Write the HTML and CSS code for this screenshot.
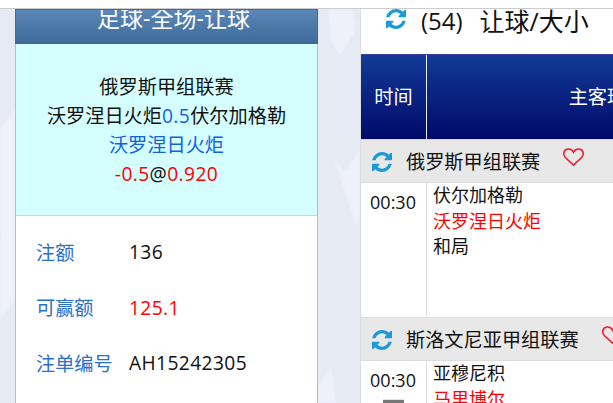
FILE: index.html
```html
<!DOCTYPE html>
<html lang="zh-CN">
<head>
  <meta charset="UTF-8" />
  <title>注单详情</title>
  <link rel="stylesheet" href="styles.css">
</head>
<body>
  <svg class="defs" width="0" height="0">
    <symbol id="refresh" viewBox="128 128 1536 1536">
      <path d="M1639 1056q0 5-1 7-64 268-268 434.5t-478 166.5q-146 0-282.5-55t-243.5-157l-129 129q-19 19-45 19t-45-19-19-45v-448q0-26 19-45t45-19h448q26 0 45 19t19 45-19 45l-137 137q71 66 161 102t187 36q134 0 250-65t186-179q11-17 53-117 8-23 30-23h192q13 0 22.5 9.5t9.5 22.5zm25-800v448q0 26-19 45t-45 19h-448q-26 0-45-19t-19-45 19-45l138-138q-148-137-349-137-134 0-250 65t-186 179q-11 17-53 117-8 23-30 23h-199q-13 0-22.5-9.5t-9.5-22.5v-7q65-268 270-434.5t480-166.5q146 0 284 55.500t245 156.500l130-129q19-19 45-19t45 19 19 45z"/>
    </symbol>
    <symbol id="heart" viewBox="0 0 24 20">
      <path d="M12 18.500 L3.500 10.500 C0.500 7.500 1.500 2.500 6 1.700 C8.500 1.300 10.800 2.500 12 5 C13.200 2.500 15.500 1.300 18 1.700 C22.500 2.500 23.500 7.500 20.500 10.500 Z"/>
    </symbol>
  </svg>

  <div class="top-strip"></div>

  <div class="main-container">
    <!-- Left Panel: bet slip -->
    <div class="slip">
      <div class="slip-header">足球-全场-让球</div>
      <div class="slip-match">
        <p>俄罗斯甲组联赛</p>
        <p>沃罗涅日火炬<span class="blue num">0.5</span>伏尔加格勒</p>
        <p class="blue">沃罗涅日火炬</p>
        <p class="num"><span class="red">-0.5</span>@<span class="red">0.920</span></p>
      </div>
      <div class="slip-rows">
        <div class="slip-row"><span class="slip-label">注额</span><span class="num">136</span></div>
        <div class="slip-row"><span class="slip-label">可赢额</span><span class="red num">125.1</span></div>
        <div class="slip-row"><span class="slip-label">注单编号</span><span class="num">AH15242305</span></div>
      </div>
    </div>

    <!-- Right Panel: matches -->
    <div class="matches">
      <div class="matches-title">
        <svg class="icon-refresh title-icon"><use href="#refresh"></use></svg>
        <span class="count">(54)</span>
        <span class="market">让球/大小</span>
      </div>
      <div class="grid">
        <div class="grid-head">
          <div class="col-time">时间</div>
          <div class="col-teams">主客球队</div>
        </div>

        <div class="league">
          <svg class="icon-refresh"><use href="#refresh"></use></svg>
          <span class="league-name">俄罗斯甲组联赛</span>
          <svg class="icon-heart"><use href="#heart"></use></svg>
        </div>
        <div class="match-row">
          <div class="col-time">00:30</div>
          <div class="col-names">
            <div>伏尔加格勒</div>
            <div class="red">沃罗涅日火炬</div>
            <div>和局</div>
          </div>
        </div>

        <div class="league">
          <svg class="icon-refresh"><use href="#refresh"></use></svg>
          <span class="league-name">斯洛文尼亚甲组联赛</span>
          <svg class="icon-heart"><use href="#heart"></use></svg>
        </div>
        <div class="match-row">
          <div class="col-time">
            00:30
            <div class="live-tag"></div>
          </div>
          <div class="col-names">
            <div>亚穆尼积</div>
            <div class="red">马里博尔</div>
          </div>
        </div>
      </div>
    </div>
  </div>
</body>
</html>
```

FILE: styles.css
```css
* {
  box-sizing: border-box;
}
html, body {
  height: 403px;
  overflow: hidden;
}
body {
  margin: 0;
  font-family: "Open Sans", "Noto Sans CJK SC", sans-serif;
  font-size: 19.2px;
  color: #111;
  background-color: #e6eaf3;
  background-image: url("data:image/svg+xml,%3Csvg xmlns='http://www.w3.org/2000/svg' width='613' height='403'%3E%3Cfilter id='b'%3E%3CfeGaussianBlur stdDeviation='1'/%3E%3C/filter%3E%3Cg fill='%23eef1fa' filter='url(%23b)'%3E%3Cpath d='M0 130L15 108V215L0 250Z'/%3E%3Cpath d='M0 250L15 215V300L0 320Z'/%3E%3Cpath d='M328 9H352L356 30L340 56L331 40Z'/%3E%3Cpath d='M334 160L345 172L360 150V215L356 225Z'/%3E%3Cpath d='M318 403V385L331 368L336 403Z'/%3E%3C/g%3E%3C/svg%3E");
  background-repeat: no-repeat;
}
.defs {
  display: block;
  height: 0;
}
p {
  margin: 0;
}
.blue {
  color: #1162e0;
}
.red {
  color: #ff0000;
}
.num {
  letter-spacing: 0.4px;
}
.top-strip {
  height: 9px;
  background: #fff;
  border-bottom: 1px solid #ccc;
}
.main-container {
  display: flex;
  height: 394px;
  padding-left: 15px;
}

/* Left panel */
.slip {
  width: 303px;
  flex-shrink: 0;
  background: #fff;
  border-left: 1px solid #bbb;
  border-right: 1px solid #bbb;
}
.slip-header {
  height: 35px;
  padding-left: 14px;
  line-height: 17px;
  text-align: center;
  font-size: 23px;
  color: #fff;
  background: linear-gradient(#5b87b8, #3d6a98);
  border: 1px solid #2c70ad;
  border-bottom: none;
  overflow: hidden;
  margin-left: -1px;
  margin-right: -1px;
}
.slip-match {
  height: 172px;
  padding-top: 28px;
  line-height: 29px;
  text-align: center;
  background: #d5ffff;
  border-bottom: 1px solid #ccd6da;
}
.slip-rows {
  padding: 8px 0 0 20px;
}
.slip-row {
  display: flex;
  align-items: center;
  height: 55.500px;
}
.slip-label {
  width: 93px;
  color: #2a70c8;
}

/* Right panel */
.matches {
  width: 253px;
  margin-left: 42px;
  background: #fff;
  border-left: 1px solid #ddd;
  overflow: hidden;
}
.matches-title {
  display: flex;
  height: 45px;
  font-size: 24px;
  line-height: 24px;
}
.icon-refresh {
  width: 20px;
  height: 20px;
  fill: #1a9ad6;
}
.title-icon {
  margin: 0 15px 0 25px;
}
.count {
  margin-right: 17px;
}
.market {
  font-size: 25px;
}
.grid {
  width: 426px;
}
.grid-head {
  display: flex;
  height: 86px;
  color: #fff;
  background: linear-gradient(#123a96, #010a6b);
  border-top: 1px solid #3b3f9c;
  border-bottom: 1px solid #d8d8d8;
}
.col-time {
  width: 66px;
  flex-shrink: 0;
  text-align: center;
  border-right: 1px solid #ddd;
}
.grid-head .col-time {
  border-right-color: #e8ecf5;
  line-height: 83px;
}
.col-teams {
  width: 360px;
  text-align: center;
  line-height: 83px;
}
.league {
  display: flex;
  align-items: center;
  height: 43px;
  padding-left: 11px;
  background: #e8e8e8;
  border-bottom: 1px solid #dcdcdc;
}
.league-name {
  margin-left: 14px;
  line-height: 26px;
  margin-top: 2px;
}
.league .icon-refresh {
  margin-top: 2px;
}
.icon-heart {
  width: 23px;
  height: 20px;
  margin: -8px 0 0 22px;
  fill: none;
  stroke: #f02030;
  stroke-width: 1.7;
  flex-shrink: 0;
}
.match-row {
  display: flex;
  height: 135px;
  border-bottom: 1px solid #dcdcdc;
}
.match-row .col-time {
  padding: 6px 1px 0 0;
  font-size: 18px;
  line-height: 26px;
}
.col-names {
  padding: 0 0 0 6px;
  font-size: 18px;
  line-height: 25.500px;
}
.live-tag {
  width: 21px;
  height: 10px;
  margin: 6px auto 0;
  background: linear-gradient(#e4e4e4 0, #e4e4e4 1px, #777 1px, #777 4px, #e4e4e4 4px);
}
```
